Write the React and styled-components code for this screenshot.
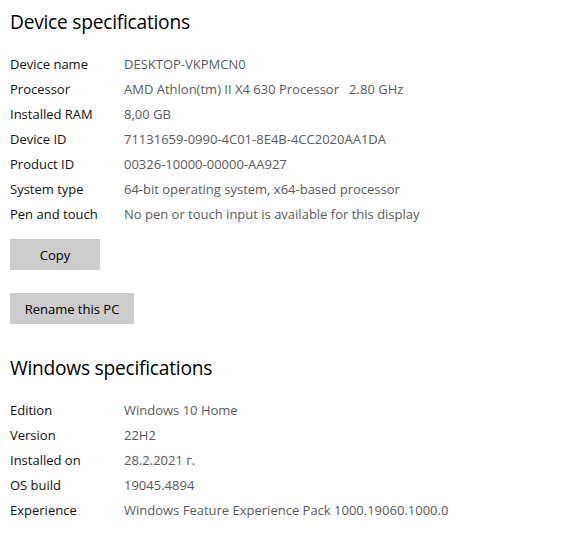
import React from "react";
import styled, { createGlobalStyle } from "styled-components";

const Global = createGlobalStyle`
  html, body { margin: 0; padding: 0; background: #fff; }
  body { font-family: "Open Sans", "Noto Sans", sans-serif; color: #000; }
`;

const Page = styled.div`
  display: flex;
  flex-direction: column;
  padding: 8px 10px 0 10px;
`;

const Heading = styled.h2`
  margin: ${(p) => p.$top || 0}px 0 0 0;
  font-size: 19.2px;
  font-weight: 400;
  line-height: 28px;
  color: #000;
  letter-spacing: -0.25px;
`;

const Table = styled.div`
  display: grid;
  grid-template-columns: 114px 1fr;
  grid-auto-rows: 25px;
  margin-top: ${(p) => p.$top}px;
`;

const Label = styled.div`
  font-size: 13px;
  line-height: 25px;
  color: #111;
  white-space: nowrap;
`;

const Value = styled.div`
  font-size: 13px;
  line-height: 25px;
  color: #5a5a5a;
  white-space: pre;
`;

const Button = styled.button`
  align-self: flex-start;
  border: none;
  background: #cccccc;
  font-family: inherit;
  font-size: 13px;
  color: #000;
  height: 31px;
  width: ${(p) => p.$w}px;
  margin-top: ${(p) => p.$top}px;
  padding: 0;
`;

const device = [
  ["Device name", "DESKTOP-VKPMCN0"],
  ["Processor", "AMD Athlon(tm) II X4 630 Processor   2.80 GHz"],
  ["Installed RAM", "8,00 GB"],
  ["Device ID", "71131659-0990-4C01-8E4B-4CC2020AA1DA"],
  ["Product ID", "00326-10000-00000-AA927"],
  ["System type", "64-bit operating system, x64-based processor"],
  ["Pen and touch", "No pen or touch input is available for this display"],
];

const windows = [
  ["Edition", "Windows 10 Home"],
  ["Version", "22H2"],
  ["Installed on", "28.2.2021 г."],
  ["OS build", "19045.4894"],
  ["Experience", "Windows Feature Experience Pack 1000.19060.1000.0"],
];

function Specs({ rows, top }) {
  return (
    <Table $top={top}>
      {rows.map(([k, v]) => (
        <React.Fragment key={k}>
          <Label>{k}</Label>
          <Value>{v}</Value>
        </React.Fragment>
      ))}
    </Table>
  );
}

export default function App() {
  return (
    <>
      <Global />
      <Page>
        <Heading>Device specifications</Heading>
        <Specs rows={device} top={16} />
        <Button $w={90} $top={12}>Copy</Button>
        <Button $w={124} $top={23}>Rename this PC</Button>
        <Heading $top={30}>Windows specifications</Heading>
        <Specs rows={windows} top={16} />
      </Page>
    </>
  );
}
